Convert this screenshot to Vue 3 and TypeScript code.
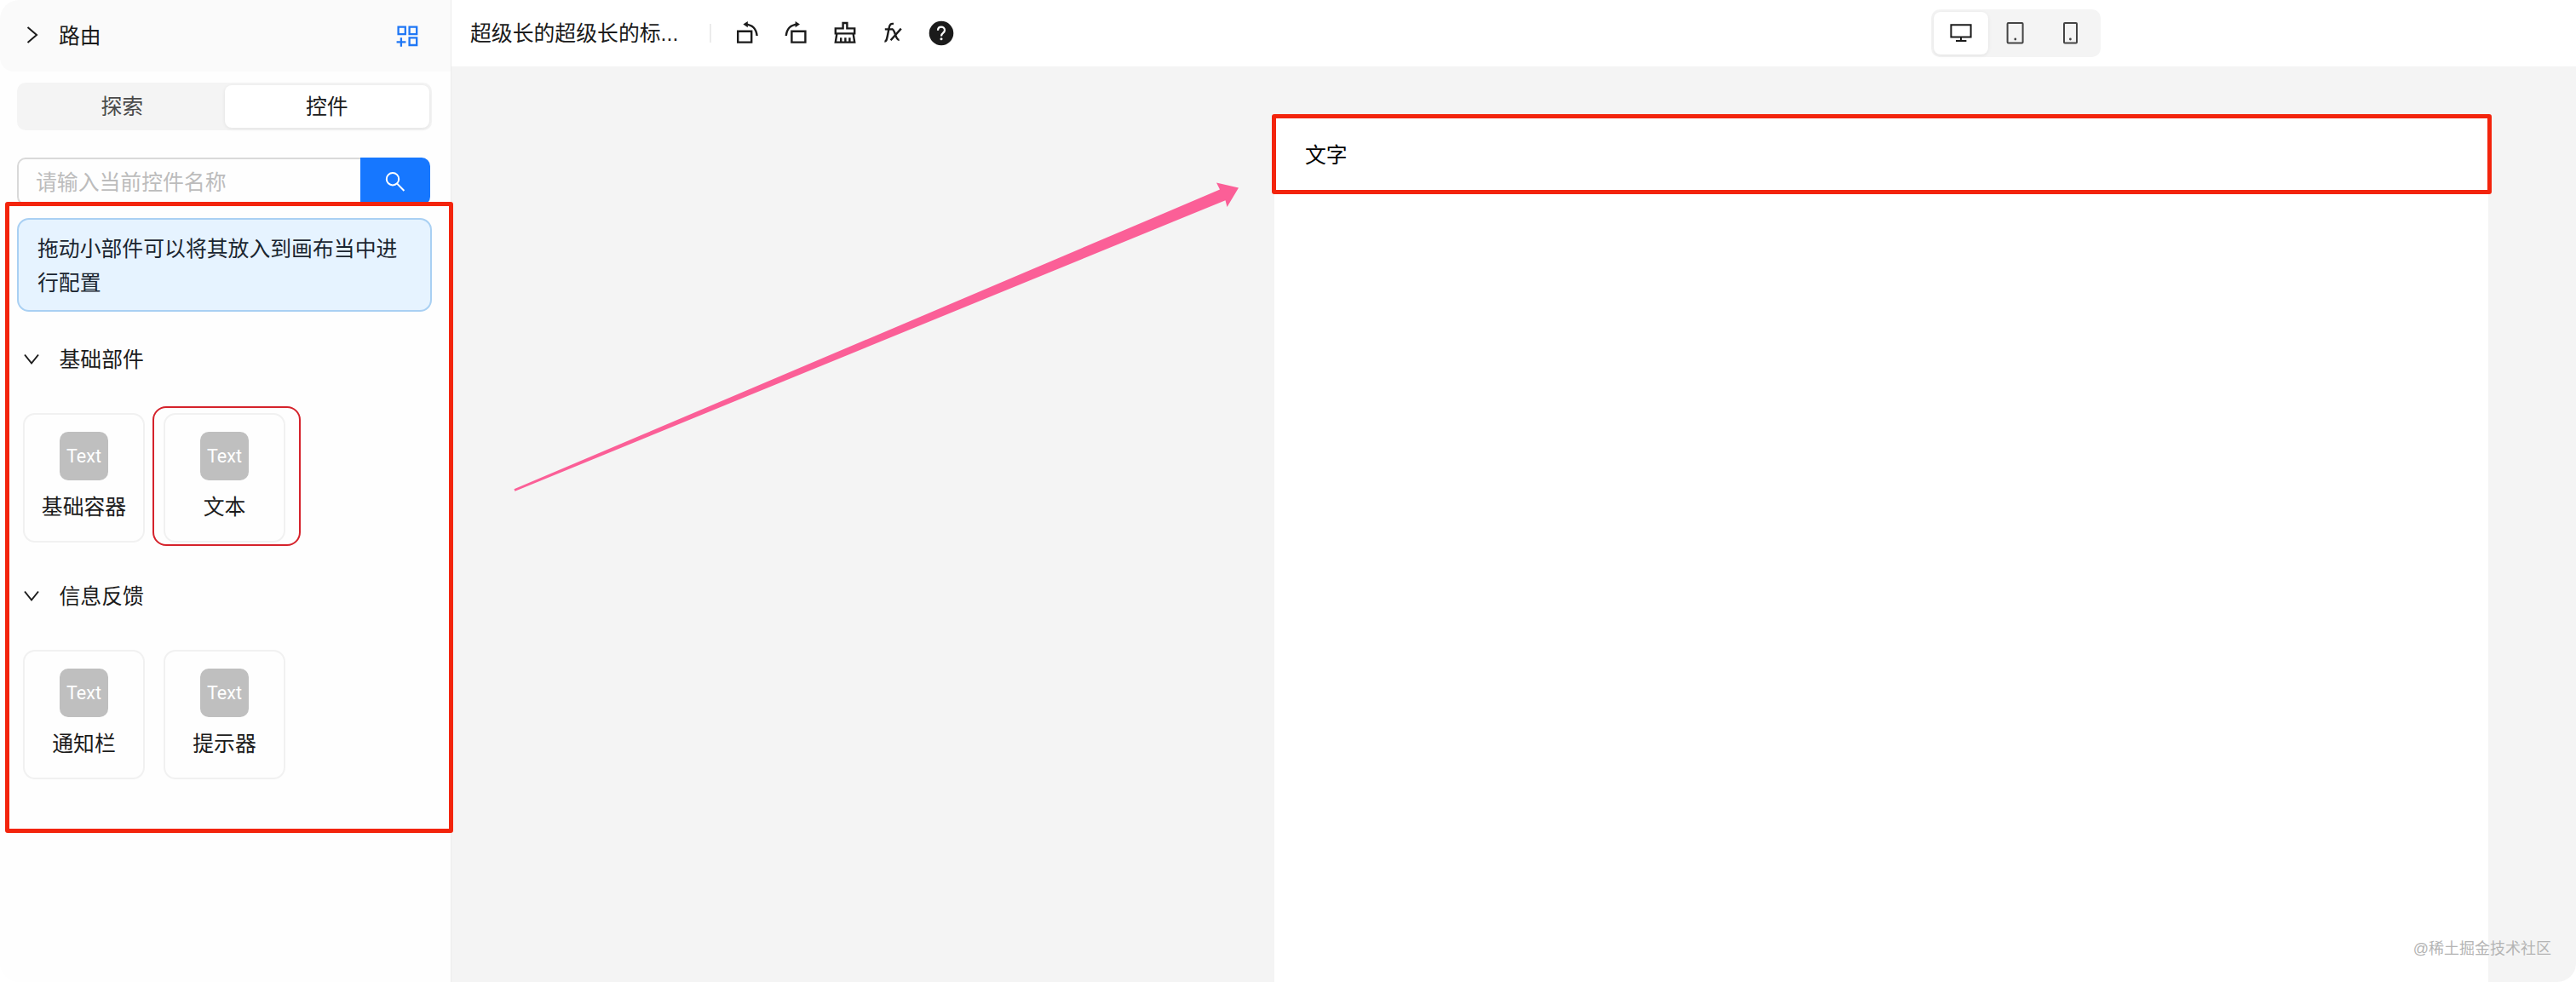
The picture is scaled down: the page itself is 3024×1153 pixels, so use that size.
<script setup lang="ts">
interface Widget {
  label: string
  selected?: boolean
}
interface WidgetGroup {
  title: string
  widgets: Widget[]
}

const groups: WidgetGroup[] = [
  { title: '基础部件', widgets: [{ label: '基础容器' }, { label: '文本', selected: true }] },
  { title: '信息反馈', widgets: [{ label: '通知栏' }, { label: '提示器' }] },
]
</script>

<template>
  <div class="editor">
    <aside class="sidebar">
      <header class="route">
        <svg class="route-arrow" width="14" height="22" viewBox="0 0 14 22"><path d="M1.5 2 L12 11 L1.5 20" /></svg>
        <span class="route-title">路由</span>
        <svg class="route-add" width="26" height="26" viewBox="0 0 26 26">
          <path d="M2.6 1.6h8.2v8.6H2.6zM15.6 1.6h8.6v8.6h-8.6zM15.6 14.4h8.6v8.6h-8.6zM5.9 14.2v10.6M.6 19.4h10.8" />
        </svg>
      </header>

      <div class="tabs">
        <div class="tab">探索</div>
        <div class="tab active">控件</div>
      </div>

      <div class="search">
        <div class="search-input">请输入当前控件名称</div>
        <div class="search-button">
          <svg width="24" height="24" viewBox="0 0 24 24"><circle cx="9" cy="9.2" r="7.2" /><path d="M14.2 14.6 L22.4 23" /></svg>
        </div>
      </div>

      <div class="tip">拖动小部件可以将其放入到画布当中进行配置</div>

      <section v-for="group in groups" :key="group.title" class="group">
        <div class="group-head">
          <svg width="18" height="14" viewBox="0 0 18 14"><path d="M1 1.5 L9 11.5 L17 1.5" /></svg>
          <span>{{ group.title }}</span>
        </div>
        <div class="cards">
          <div v-for="w in group.widgets" :key="w.label" class="card" :class="{ selected: w.selected }">
            <div class="thumb">Text</div>
            <div class="label">{{ w.label }}</div>
          </div>
        </div>
      </section>
      <div class="frame frame-panel"></div>
    </aside>

    <main class="main">
      <header class="toolbar">
        <div class="title">超级长的超级长的标...</div>
        <div class="divider"></div>
        <div class="tools">
          <svg class="tool" width="28" height="28" viewBox="0 0 28 28">
            <path d="M3.2 11.8h16v12.8h-16zM12 3.6 C20 4 24.8 9 25.6 17" /><path class="solid" d="M9.4 3.6 L14.8 0 V7.2z" />
          </svg>
          <svg class="tool" width="28" height="28" viewBox="0 0 28 28">
            <path d="M9.4 11.8h16v12.8h-16zM16.4 3.6 C8.4 4 3.6 9 2.8 17" /><path class="solid" d="M19 3.6 L13.6 0 V7.2z" />
          </svg>
          <svg class="tool" width="28" height="28" viewBox="0 0 28 28">
            <path d="M11.6 2h4.8v6.4h8.8v6H2.8v-6h8.8zM4.4 14.4L2.8 24.6h22.4L23.6 14.4M9.2 24.2v-5M14.4 24.2v-5M19.4 24.2v-5" />
          </svg>
          <svg class="tool" width="28" height="28" viewBox="0 0 28 28">
            <path d="M3.4 23.6 C5.6 23.8 6 21 6.8 17.2 L8.6 8 C9.4 3.6 10.8 2.4 14 3M3.8 9.4h9.4M12 9.2 C15.8 8.6 16 22.4 20.6 21.8M22.8 8.6 L10.6 22.2" />
          </svg>
          <svg class="help" width="30" height="30" viewBox="0 0 30 30">
            <circle cx="15" cy="15" r="14.3" />
            <path d="M11 11.8 C11 6.2 19 6.4 19 11.6 C19 14.8 15 14.6 15 18.4" /><circle class="dot" cx="15" cy="21.8" r="1.5" />
          </svg>
        </div>
        <div class="devices">
          <div class="device active">
            <svg width="28" height="28" viewBox="0 0 28 28"><path d="M2.4 4.2h23.2v14.4H2.4zM14 19v4M8 23h12.4" /></svg>
          </div>
          <div class="device">
            <svg width="28" height="28" viewBox="0 0 28 28"><rect x="4.6" y="2" width="18" height="23.4" rx="1" /><circle class="dot" cx="13.8" cy="21" r="1.4" /></svg>
          </div>
          <div class="device">
            <svg width="28" height="28" viewBox="0 0 28 28"><rect x="6" y="2" width="15" height="23.4" rx="1" /><circle class="dot" cx="13.4" cy="21" r="1.4" /></svg>
          </div>
        </div>
      </header>

      <div class="stage">
        <div class="canvas">
          <div class="canvas-text">文字</div>
          <div class="frame frame-text"></div>
        </div>
      </div>
    </main>

    <svg class="arrow" width="870" height="380" viewBox="593 205 870 380">
      <path d="M603.5 574.3 L1432 222.6 L1428 214.5 L1454 220.5 L1440.5 243 L1438.5 235.2 L604.5 576.8z" />
    </svg>
    <div class="watermark">@稀土掘金技术社区</div>
  </div>
</template>

<style>
body {
  margin: 0;
  background: #fff;
}
</style>

<style scoped>
.editor {
  position: relative;
  box-sizing: border-box;
  display: flex;
  width: 3024px;
  height: 1153px;
  overflow: hidden;
  border-radius: 22px;
  background: #fff;
  color: #1b1b1b;
  font-family: "Liberation Sans", "Noto Sans CJK SC", sans-serif;
  font-size: 24.85px;
}
.editor * {
  box-sizing: border-box;
}
svg {
  display: block;
  flex: none;
  fill: none;
  stroke: #1b1b1b;
  stroke-width: 2;
}
.sidebar {
  position: relative;
  flex: none;
  width: 530px;
  height: 1153px;
  border-right: 1px solid #ececec;
  background: #fefefe;
}
.route {
  display: flex;
  align-items: center;
  height: 84px;
  padding: 0 38px 2px 31px;
  border-radius: 22px 0 0 16px;
  background: #fafafa;
}
.route-title {
  flex: 1;
  margin: -3px 0 0 24px;
}
.route-add {
  stroke: #1f77f5;
  stroke-width: 2.3;
  margin-top: 4px;
}
.tabs {
  display: flex;
  width: 487px;
  height: 56px;
  margin: 13px 0 0 20px;
  padding: 3px;
  border-radius: 10px;
  background: #f4f4f4;
}
.tab {
  flex: 1;
  line-height: 52px;
  text-align: center;
  color: #4a4a4a;
  border-radius: 8px;
}
.tab.active {
  background: #fff;
  color: #1b1b1b;
  box-shadow: 0 1px 4px rgba(0, 0, 0, 0.08);
}
.search {
  display: flex;
  width: 485px;
  height: 56px;
  margin: 32px 0 0 20px;
}
.search-input {
  flex: 1;
  padding-left: 20px;
  border: 2px solid #d9d9d9;
  border-right: 0;
  border-radius: 10px 0 0 10px;
  line-height: 55px;
  color: #bcbcbc;
}
.search-button {
  display: flex;
  align-items: center;
  justify-content: center;
  width: 82px;
  border-radius: 0 10px 10px 0;
  background: #1677ff;
}
.search-button svg {
  stroke: #fff;
}
.tip {
  width: 487px;
  height: 110px;
  margin: 15px 0 0 20px;
  padding: 15px 28px 0 22px;
  border: 2px solid #a9d0f3;
  border-radius: 14px;
  background: #e6f3ff;
  line-height: 39.5px;
  color: #1a2530;
  word-break: break-all;
}
.group {
  height: 278px;
  padding-top: 36px;
}
.group-head {
  display: flex;
  align-items: center;
  height: 40px;
  padding-left: 28px;
}
.group-head span {
  margin: -4px 0 0 23.5px;
}
.cards {
  display: flex;
  gap: 22px;
  margin: 43px 0 0 27px;
}
.card {
  position: relative;
  display: flex;
  flex-direction: column;
  align-items: center;
  width: 143px;
  height: 152px;
  padding-top: 20px;
  border: 2px solid #f1f1f1;
  border-radius: 14px;
}
.card.selected::after {
  content: "";
  position: absolute;
  box-sizing: border-box;
  left: -15px;
  top: -10px;
  width: 174px;
  height: 164px;
  border: 2px solid #d5222b;
  border-radius: 16px;
}
.thumb {
  width: 57px;
  height: 57px;
  border-radius: 10px;
  background: #bfbfbf;
  color: #fff;
  font-family: Roboto, "Liberation Sans", sans-serif;
  font-size: 21.5px;
  line-height: 58px;
  text-align: center;
}
.label {
  height: 40px;
  margin-top: 11px;
  line-height: 41px;
  white-space: nowrap;
}
.frame {
  position: absolute;
  border: 5px solid #f3240c;
  border-radius: 3px;
}
.frame-panel {
  left: 6px;
  top: 237px;
  width: 526px;
  height: 741px;
  z-index: 2;
}
.main {
  display: flex;
  flex: 1;
  flex-direction: column;
}
.toolbar {
  display: flex;
  align-items: center;
  height: 78px;
  padding-left: 22px;
  background: #fff;
}
.title {
  width: 281px;
  margin-top: -4px;
  white-space: nowrap;
}
.divider {
  width: 2px;
  height: 22px;
  background: #ebebeb;
}
.tools {
  display: flex;
  align-items: center;
  gap: 29.3px;
  width: 1432px;
  padding-left: 28px;
}
.tool {
  stroke-width: 2.4;
}
.tool .solid {
  fill: #1b1b1b;
  stroke: none;
}
.help {
  fill: #1b1b1b;
  stroke: none;
  margin: -1px 0 0 -2px;
}
.help path {
  fill: none;
  stroke: #fff;
  stroke-width: 2.2;
}
.help .dot {
  fill: #fff;
}
.devices {
  display: flex;
  width: 199px;
  height: 56px;
  margin-top: -1px;
  padding: 3px;
  border-radius: 10px;
  background: #f4f4f4;
}
.device {
  display: flex;
  flex: 1;
  align-items: center;
  justify-content: center;
  border-radius: 8px;
}
.device svg {
  stroke: #444;
}
.device .dot {
  fill: #444;
  stroke: none;
}
.device.active {
  background: #fff;
  box-shadow: 0 1px 4px rgba(0, 0, 0, 0.08);
}
.device.active svg {
  stroke: #1b1b1b;
}
.stage {
  flex: 1;
  padding: 58px 103px 0 966px;
  background: #f4f4f4;
}
.canvas {
  position: relative;
  height: 100%;
  padding: 27px 0 0 36px;
  background: #fff;
}
.canvas-text {
  line-height: 40px;
  color: #000;
}
.frame-text {
  left: -3px;
  top: -2px;
  width: 1432px;
  height: 94px;
}
.arrow {
  position: absolute;
  left: 593px;
  top: 205px;
}
.arrow path {
  fill: #fb5f97;
  stroke: none;
}
.watermark {
  position: absolute;
  right: 29px;
  top: 1100px;
  font-size: 18px;
  line-height: 28px;
  color: #b4b4b4;
}
</style>
